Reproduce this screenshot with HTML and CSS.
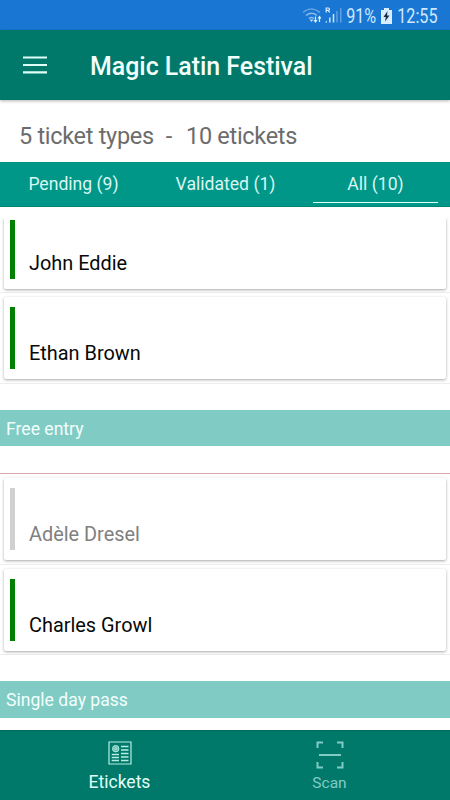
FILE: index.html
```
<!DOCTYPE html>
<html lang="en">
<head>
<meta charset="utf-8">
<title>Magic Latin Festival</title>
<link rel="stylesheet" href="styles.css">
</head>
<body>
<div class="status">
  <svg class="signals" width="50" height="20" viewBox="0 0 50 20">
    <g fill="none" stroke="#8ebdea" stroke-width="1.6">
      <path d="M1 6.5Q9-.5 18 6.5" opacity=".6"/><path d="M4 9.5Q9.500 5 15 9.500"/><path d="M7 12.500Q9.500 10.500 12 12.500"/>
    </g>
    <path d="M7.500 13.500h4L9.500 16z" fill="#b8dcf8"/>
    <g fill="none" stroke="#d8edff" stroke-width="1.200"><path d="M13.500 10.500v5M12 14l1.500 2 1.500-2M17.500 16v-5M16 12.500l1.500-2 1.500 2"/></g>
    <path d="M24.200 6.500V2h2q1.300 0 1.300 1.200t-1.300 1.200h-2m2 0l1.400 2.100" fill="none" stroke="#d8edff" stroke-width="1.200"/>
    <path d="M23 16.500l2-2v2zM27 11.500h1.600v5H27zM30.700 8h1.600v8.500h-1.600z" fill="#c1e0fa"/>
    <path d="M34.200 5h1.500v11.500h-1.500zM38 2h1.500v14.500H38z" fill="#5d9fe0"/>
  </svg>
  <span class="percent">91%</span>
  <svg class="battery" width="11" height="16" viewBox="0 0 11 16"><path d="M3 0h5v2h3v14H0V2h3z" fill="#d8edff"/><path d="M6.500 3L2.500 9h2.300L4 13.500 8.500 7.500H6z" fill="#172f45"/></svg>
  <span class="clock">12:55</span>
</div>
<header class="appbar">
  <svg width="24" height="18" viewBox="0 0 24 18"><path d="M0 1.500h24M0 9h24M0 16.300h24" stroke="#e0fff8" stroke-width="2.200"/></svg>
  <h1>Magic Latin Festival</h1>
</header>
<div class="summary"><span>5 ticket types</span><span class="dash">-</span><span>10 etickets</span></div>
<nav class="tabs">
  <div class="tab"><span>Pending (9)</span></div>
  <div class="tab"><span>Validated (1)</span></div>
  <div class="tab active"><span>All (10)</span></div>
</nav>
<main class="list">
  <div class="row first"><article class="card"><i></i><span>John Eddie</span></article></div>
  <div class="row"><article class="card"><i></i><span>Ethan Brown</span></article></div>
  <h2 class="section"><span>Free entry</span></h2>
  <hr>
  <div class="row"><article class="card used"><i></i><span>Adèle Dresel</span></article></div>
  <div class="row"><article class="card"><i></i><span>Charles Growl</span></article></div>
  <h2 class="section"><span>Single day pass</span></h2>
</main>
<nav class="bottom">
  <div class="item selected">
    <svg width="24" height="24" viewBox="0 0 24 24" fill="none" stroke="#b5eee3"><path d="M1 1h22v22H1z" stroke-width="1.200"/><circle cx="7.700" cy="7.700" r="3.200" fill="#69bdb0" stroke-width="1"/><circle cx="7.700" cy="7.700" r="1" stroke-width=".8"/><path d="M13 5.500h7.500M13 9h7.500M13 12.500h7.500M13 16h7.500M13 19.500h7.500M3.700 13.500H11M3.700 16.500H11M3.700 19.500H11" stroke-width="1.300"/></svg>
    <span>Etickets</span>
  </div>
  <div class="item">
    <svg width="28" height="28" viewBox="0 0 28 28" fill="none" stroke="#80cbc4" stroke-width="2"><path d="M1.500 7V1.500H7M21 1.500h5.500V7M26.500 21v5.500H21M7 26.500H1.500V21M3 14h22"/></svg>
    <span>Scan</span>
  </div>
</nav>
</body>
</html>
```
FILE: styles.css
```
* { box-sizing: border-box; }
body {
  margin: 0;
  width: 450px;
  height: 800px;
  overflow: hidden;
  display: flex;
  flex-direction: column;
  background: #fff;
  font-family: Roboto, sans-serif;
  white-space: nowrap;
}
.status {
  height: 30px;
  flex: none;
  display: flex;
  align-items: center;
  justify-content: flex-end;
  padding: 2px 12px 0 0;
  background: #1976d2;
  color: #cfe8ff;
  font-size: 19.500px;
}
.signals { margin-right: -12px; }
.percent, .clock { display: flex; transform-origin: right center; transform: scaleX(.83); }
.battery { margin: 0 -3px 0 5px; }
.appbar {
  height: 70px;
  flex: none;
  display: flex;
  align-items: center;
  padding-left: 23px;
  background: #00796b;
  box-shadow: 0 1px 3px rgba(0, 0, 0, .3);
  position: relative;
}
h1 {
  margin: 2px 0 0 43px;
  color: #f2fffc;
  font-size: 24.900px;
  font-weight: 500;
}
.summary {
  height: 62px;
  flex: none;
  display: flex;
  align-items: center;
  padding: 9px 0 0 19px;
  color: #6c6c6c;
  font-size: 23.500px;
  letter-spacing: -.3px;
}
.dash { margin: 0 14px 0 12px; }
.tabs {
  height: 45px;
  flex: none;
  display: grid;
  grid-template-columns: repeat(3, 1fr);
  background: #009688;
  color: #d9f7f2;
  font-size: 17.600px;
  border-bottom: 1px solid #008577;
}
.tab {
  margin: 0 14px 3px 11px;
  padding-top: 4px;
  display: flex;
  align-items: center;
  justify-content: center;
  border-bottom: 1px solid transparent;
}
.tab.active { margin: 0 12px 3px 13px; border-color: #e0fff8; }
.tab:nth-child(2) { margin: 0 12px 3px 13px; }
.list {
  flex: 1;
  min-height: 0;
  margin-top: 11px;
  overflow: hidden;
}
.row {
  height: 90.500px;
  padding: 4px 4px 4px;
  border-bottom: 1px solid #ededed;
}
.row.first { height: 75px; padding-top: 0; }
.card {
  height: 82px;
  padding: 10px 6px;
  display: flex;
  background: #fff;
  border-radius: 2px;
  box-shadow: 0 1px 3px rgba(0, 0, 0, .35);
  color: #080808;
  font-size: 19.900px;
}
.first .card { height: 71px; padding-top: 2px; border-radius: 0 0 2px 2px; }
.card i { width: 5px; background: #008000; }
.card span { align-self: flex-end; margin: 0 0 3px 14px; line-height: 24px; }
.used { color: #808080; }
.used i { background: #d0d0d0; }
.section {
  height: 36.500px;
  margin: 26px 0 27px;
  padding: 2px 0 0 6px;
  display: flex;
  align-items: center;
  background: #80cbc4;
  color: #f2fffd;
  font-size: 17.600px;
  font-weight: 400;
}
hr { margin: 0; border: 0; height: 1px; background: #d8a6ae; }
.bottom {
  height: 70px;
  flex: none;
  display: grid;
  grid-template-columns: 209px 211px;
  justify-content: center;
  background: #00796b;
  border-top: 1px solid #006b5e;
}
.item {
  display: flex;
  flex-direction: column;
  align-items: center;
  color: #80cbc4;
  font-size: 15.500px;
  line-height: 20px;
  padding-top: 10px;
}
.item svg { flex: none; }
.item span { margin-top: 4px; }
.item.selected { color: #e0fff8; font-size: 17.500px; }
.selected span { margin-top: 7px; }
```
